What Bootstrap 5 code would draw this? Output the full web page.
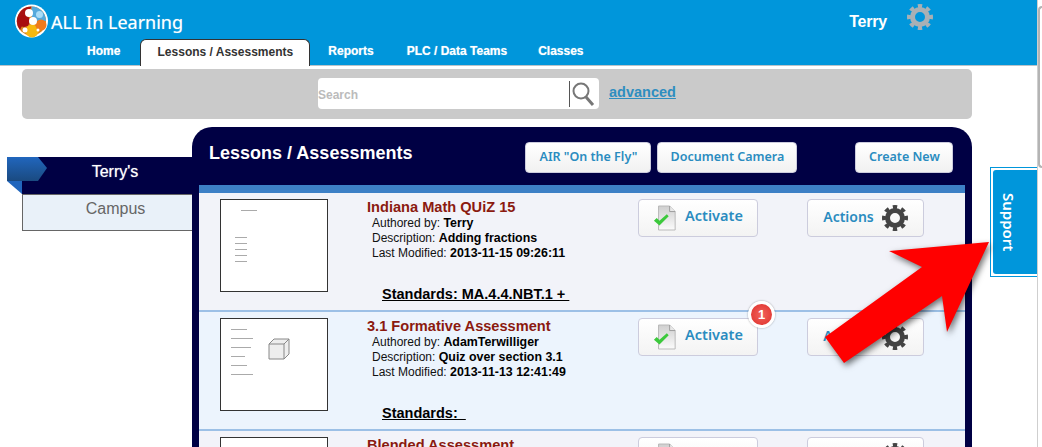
<!DOCTYPE html>
<html lang="en">
<head>
<meta charset="utf-8">
<title>ALL In Learning</title>
<link href="https://cdn.jsdelivr.net/npm/bootstrap@5.3.0/dist/css/bootstrap.min.css" rel="stylesheet">
<style>
html,body{height:447px;overflow:hidden;background:#fff;font-family:"Liberation Sans",Arial,sans-serif;}
.app-wrap{position:relative;height:447px;width:1042px;overflow:hidden;}
.svg-defs{position:absolute;}
.top-bar{background:#0096db;height:66px;border-bottom:1px solid #b9c3c9;width:1037px;}
.brand-row{height:39px;padding-left:15px;}
.brand-name{color:#fff;font-family:"Noto Sans",sans-serif;font-size:18px;margin-left:3px;line-height:1;margin-top:13px;text-shadow:0 0 1px rgba(255,255,255,.5);}
.user-name{color:#fff;font-weight:700;font-size:16px;position:relative;top:-6px;letter-spacing:-.2px;}
.user-box{margin-right:104px;gap:20px;}
.head-cog{color:#a8b0b5;}
.tab-row{padding-left:87px;height:27px;}
.tab-lnk{color:#fff;font-weight:700;font-size:12px;text-decoration:none;line-height:24px;text-shadow:0 0 1px rgba(255,255,255,.6);}
.tab-cur{background:#fff;color:#333;border:1px solid #333;border-bottom:0;border-radius:6px 6px 0 0;height:27px;width:170px;text-align:center;margin-left:20px;margin-right:18px;line-height:25px;text-shadow:none;}
.tab-plc{margin-left:33px;}
.tab-cls{margin-left:31px;}
.search-bar{background:#cacaca;height:50px;margin:3px 70px 0 22px;border-radius:5px;}
.search-field{width:281px;height:31px;background:#fff;border-radius:4px;margin-left:296px;margin-top:-1px;position:relative;}
.search-hint{color:#bbb;font-size:12px;font-weight:700;line-height:31px;position:relative;top:2px;}
.search-sep{width:1px;height:26px;background:#555;margin-left:auto;margin-right:1px;}
.adv-lnk{color:#2e8ec0;font-weight:700;font-size:14.5px;margin-left:10px;margin-top:-2px;}
.main-area{margin-top:8px;}
.side-col{width:170px;margin-left:22px;padding-top:30px;position:relative;}
.side-head{background:#004;height:37px;color:#fff;font-size:16px;text-align:center;line-height:29px;padding-left:16px;text-shadow:0 0 1px rgba(255,255,255,.7);}
.side-item{background:#e9f1f9;height:37px;border:1px solid #666;border-right:0;color:#666;font-size:16px;text-align:center;line-height:28px;padding-left:16px;}
.side-flag{position:absolute;left:-15px;top:30px;}
.panel-box{width:780px;height:340px;background:#004;border-radius:20px 20px 0 0;padding:0 7px;}
.panel-head{height:58px;padding-top:15px;}
.panel-title{color:#fff;font-weight:700;font-size:18px;margin-left:10px;line-height:22px;}
.tool-btn{background:linear-gradient(#fff,#f1f1f1);border:1px solid #ccd;border-radius:4px;color:#2a8cc0;font-family:"Noto Sans",sans-serif;font-size:12.5px;font-weight:600;height:31px;display:flex;align-items:center;justify-content:center;text-decoration:none;}
.tool-air{width:126px;margin-left:113px;}
.tool-doc{width:140px;margin-left:6px;}
.tool-new{width:98px;margin-left:58px;}
.band{height:8px;background:#3d80c6;}
.item-row{height:119px;border-bottom:2px solid #9cc0e6;background:#f2f3f9;padding:6px 0 0 21px;position:relative;}
.item-row.alt{background:#ecf4fd;}
.item-thumb{width:108px;height:93px;border:1px solid #333;background:#fff;flex:none;}
.thumb-a{padding:10px 0 0 14px;}
.thumb-b{padding:10px 0 0 10px;}
.lines-a{gap:5px;}
.lines-b{gap:8px;width:22px;}
.mini{display:block;background:#aaa;height:1px;width:12px;}
.mini-head{width:16px;margin:0 0 21px 6px;}
.mini-s{width:14px;}
.mini-m{width:16px;}
.mini-l{width:20px;}
.mini-x{width:22px;}
.cube{margin:9px 0 0 15px;}
.item-info{width:271px;margin-left:39px;flex:none;color:#111;font-size:12px;line-height:15px;}
.item-title{color:#8b1a10;font-weight:700;font-size:14.6px;line-height:17px;}
.item-meta{padding-left:5px;}
.item-meta b{color:#000;font-size:12.4px;}
.item-std{font-weight:700;font-size:14.5px;color:#000;text-decoration:underline;margin:25px 0 0 15px;white-space:pre;line-height:16px;}
.act-btn{width:120px;height:38px;background:linear-gradient(#fff,#f3f3f3);border:1px solid #ccd;border-radius:4px;color:#2a8cc0;font-family:"Noto Sans",sans-serif;font-size:14.5px;font-weight:600;flex:none;position:relative;}
.act-lbl{position:relative;top:-2px;}
.act-two{width:117px;margin-left:49px;font-size:14px;}
.row-cog{color:#444;}
.notify{position:absolute;right:-18px;top:-18px;width:27px;height:27px;border-radius:50%;background:radial-gradient(#f2625c,#dd2f2a);border:3px solid #fff;box-shadow:0 0 2px rgba(0,0,0,.4);color:#fff;font:700 13px/21px "Liberation Sans",sans-serif;text-align:center;}
.support-tab{position:absolute;left:990px;top:167px;width:47px;height:110px;border:1px solid #0096db;border-right:0;background:#fff;padding:2px 0 2px 2px;}
.support-in{background:#0096db;width:100%;height:100%;border-radius:3px 0 0 3px;color:#fff;writing-mode:vertical-rl;text-align:center;font-family:"Noto Sans",sans-serif;font-size:15px;font-weight:600;line-height:30px;padding-right:13px;}
.scroll-track{position:absolute;right:0;top:0;bottom:0;width:5px;background:#fff;border-left:1px solid #cfcfcf;}
.scroll-thumb{height:162px;margin-top:6px;background:#fff;border:2px solid #b4b4b4;border-right:0;border-radius:5px 0 0 5px;}
.big-arrow{position:absolute;left:815px;top:232px;filter:drop-shadow(2px 3px 3px rgba(0,0,0,.55));}
</style>
</head>
<body>
<svg width="0" height="0" class="svg-defs" aria-hidden="true">
  <defs>
    <linearGradient id="pg" x1="0" y1="0" x2="0" y2="1"><stop offset="0" stop-color="#cfcfcf"/><stop offset="1" stop-color="#fbfbfb"/></linearGradient>
    <symbol id="cog" viewBox="0 0 26 26">
      <circle cx="13" cy="13" r="7.5" fill="none" stroke="currentColor" stroke-width="5"/>
      <circle cx="13" cy="13" r="10.5" fill="none" stroke="currentColor" stroke-width="5" pathLength="80" stroke-dasharray="5 5" stroke-dashoffset="2.5"/>
    </symbol>
    <symbol id="doc" viewBox="0 0 26 28">
      <path d="M6 1h12l6 6v20H6z" fill="url(#pg)" stroke="#b5b5b5"/>
      <path d="M18 1v6h6" fill="#e8e8e8" stroke="#999"/>
      <path d="M1 17l3-3 3 3 8-7 2 2-10 10z" fill="#3cc93c"/>
    </symbol>
  </defs>
</svg>
<div class="app-wrap">
  <header class="top-bar">
    <div class="brand-row d-flex align-items-start justify-content-between">
      <div class="d-flex align-items-start">
        <svg width="33" height="34" viewBox="0 0 33 34" class="mt-1" aria-hidden="true">
          <circle cx="16.5" cy="17" r="16.500" fill="#fff"/>
          <circle cx="16.5" cy="17" r="14.500" fill="#d9831e"/>
          <path d="M16.500 2.500A14.500 14.500 0 0 0 5 26z" fill="#a81212"/>
          <path d="M16.500 2.500A14.500 14.500 0 0 1 31 17L17 17z" fill="#55a9dc"/>
          <circle cx="17" cy="27" r="6.500" fill="#f7b80f"/>
          <circle cx="26" cy="21" r="5.500" fill="#ee7a1c"/>
          <circle cx="9" cy="17" r="6" fill="#a80e0e"/>
          <circle cx="14" cy="9" r="4" fill="#fff"/>
          <circle cx="24.500" cy="10.500" r="3.500" fill="#a9dcf7"/>
          <circle cx="18" cy="17" r="4" fill="#fff"/>
          <circle cx="10" cy="26" r="2.500" fill="#fff"/>
          <circle cx="23" cy="26" r="1.500" fill="#fff"/>
        </svg>
        <div class="brand-name">ALL In Learning</div>
      </div>
      <div class="user-box d-flex align-items-start">
        <span class="user-name mt-3">Terry</span>
        <svg width="26" height="26" class="mt-1 head-cog" aria-hidden="true"><use href="#cog"/></svg>
      </div>
    </div>
    <nav class="tab-row d-flex align-items-start">
      <a class="tab-lnk" href="#">Home</a>
      <a class="tab-lnk tab-cur" href="#">Lessons / Assessments</a>
      <a class="tab-lnk" href="#">Reports</a>
      <a class="tab-lnk tab-plc" href="#">PLC / Data Teams</a>
      <a class="tab-lnk tab-cls" href="#">Classes</a>
    </nav>
  </header>

  <div class="search-bar d-flex align-items-center">
    <div class="search-field d-flex align-items-center">
      <span class="search-hint">Search</span>
      <span class="search-sep"></span>
      <svg width="24" height="26" viewBox="0 0 24 26" class="me-1" aria-hidden="true"><circle cx="10" cy="10" r="7.500" fill="none" stroke="#777" stroke-width="2"/><path d="M15 16l7 8" stroke="#777" stroke-width="3"/></svg>
    </div>
    <a href="#" class="adv-lnk">advanced</a>
  </div>

  <div class="main-area d-flex">
    <aside class="side-col">
      <div class="side-head">Terry's</div>
      <div class="side-item">Campus</div>
      <svg class="side-flag" width="40" height="37" viewBox="0 0 40 37" aria-hidden="true">
        <defs><linearGradient id="fl" x1="0" y1="0" x2="0" y2="1"><stop offset="0" stop-color="#2166bd"/><stop offset="1" stop-color="#1a4a80"/></linearGradient></defs>
        <path d="M15 24v13L0 24z" fill="#2166bd"/>
        <path d="M0 0h31l9 11-9 13H0z" fill="url(#fl)"/>
      </svg>
    </aside>
    <section class="panel-box">
      <div class="panel-head d-flex align-items-start">
        <div class="panel-title">Lessons / Assessments</div>
        <a href="#" class="tool-btn tool-air">AIR "On the Fly"</a>
        <a href="#" class="tool-btn tool-doc">Document Camera</a>
        <a href="#" class="tool-btn tool-new">Create New</a>
      </div>
      <div class="band"></div>

      <div class="item-row d-flex align-items-start">
        <div class="item-thumb thumb-a">
          <div class="d-flex flex-column lines-a">
            <span class="mini mini-head"></span>
            <span class="mini"></span>
            <span class="mini"></span>
            <span class="mini"></span>
            <span class="mini"></span>
            <span class="mini"></span>
          </div>
        </div>
        <div class="item-info">
          <div class="item-title">Indiana Math QUiZ 15</div>
          <div class="item-meta">Authored by: <b>Terry</b><br>Description: <b>Adding fractions</b><br>Last Modified: <b>2013-11-15 09:26:11</b></div>
          <div class="item-std">Standards: MA.4.4.NBT.1 + </div>
        </div>
        <a href="#" class="act-btn d-flex align-items-center justify-content-center gap-2 text-decoration-none"><svg width="24" height="26" aria-hidden="true"><use href="#doc"/></svg><span class="act-lbl">Activate</span></a>
        <a href="#" class="act-btn act-two d-flex align-items-center justify-content-center gap-2 text-decoration-none"><span class="act-lbl">Actions</span><svg width="26" height="26" class="row-cog" aria-hidden="true"><use href="#cog"/></svg></a>
      </div>

      <div class="item-row alt d-flex align-items-start">
        <div class="item-thumb thumb-b d-flex align-items-start">
          <div class="d-flex flex-column lines-b">
            <span class="mini mini-m"></span>
            <span class="mini mini-x"></span>
            <span class="mini mini-l"></span>
            <span class="mini mini-s"></span>
            <span class="mini mini-m"></span>
            <span class="mini mini-x"></span>
          </div>
          <svg width="22" height="22" viewBox="0 0 22 22" class="cube" aria-hidden="true"><path d="M1 6h15v15H1zM1 6l5-5h15v15l-5 5M16 6l5-5" fill="#ddd" fill-opacity=".5" stroke="#888"/></svg>
        </div>
        <div class="item-info">
          <div class="item-title">3.1 Formative Assessment</div>
          <div class="item-meta">Authored by: <b>AdamTerwilliger</b><br>Description: <b>Quiz over section 3.1</b><br>Last Modified: <b>2013-11-13 12:41:49</b></div>
          <div class="item-std">Standards:  </div>
        </div>
        <a href="#" class="act-btn d-flex align-items-center justify-content-center gap-2 text-decoration-none"><svg width="24" height="26" aria-hidden="true"><use href="#doc"/></svg><span class="act-lbl">Activate</span><span class="notify">1</span></a>
        <a href="#" class="act-btn act-two d-flex align-items-center justify-content-center gap-2 text-decoration-none"><span class="act-lbl">Actions</span><svg width="26" height="26" class="row-cog" aria-hidden="true"><use href="#cog"/></svg></a>
      </div>

      <div class="item-row d-flex align-items-start">
        <div class="item-thumb"></div>
        <div class="item-info"><div class="item-title">Blended Assessment</div></div>
        <a href="#" class="act-btn d-flex align-items-center justify-content-center gap-2 text-decoration-none"><svg width="24" height="26" aria-hidden="true"><use href="#doc"/></svg><span class="act-lbl">Activate</span></a>
        <a href="#" class="act-btn act-two d-flex align-items-center justify-content-center gap-2 text-decoration-none"><span class="act-lbl">Actions</span><svg width="26" height="26" class="row-cog" aria-hidden="true"><use href="#cog"/></svg></a>
      </div>
    </section>
  </div>

  <div class="support-tab"><div class="support-in">Support</div></div>
  <div class="scroll-track"><div class="scroll-thumb"></div></div>
  <svg class="big-arrow" width="180" height="140" viewBox="815 232 180 140" aria-hidden="true">
    <path d="M989 242L889 251L922 267L825 337L844 363L942 296L947 332z" fill="#f00"/>
  </svg>
</div>
<script src="https://cdn.jsdelivr.net/npm/bootstrap@5.3.0/dist/js/bootstrap.bundle.min.js"></script>
</body>
</html>
